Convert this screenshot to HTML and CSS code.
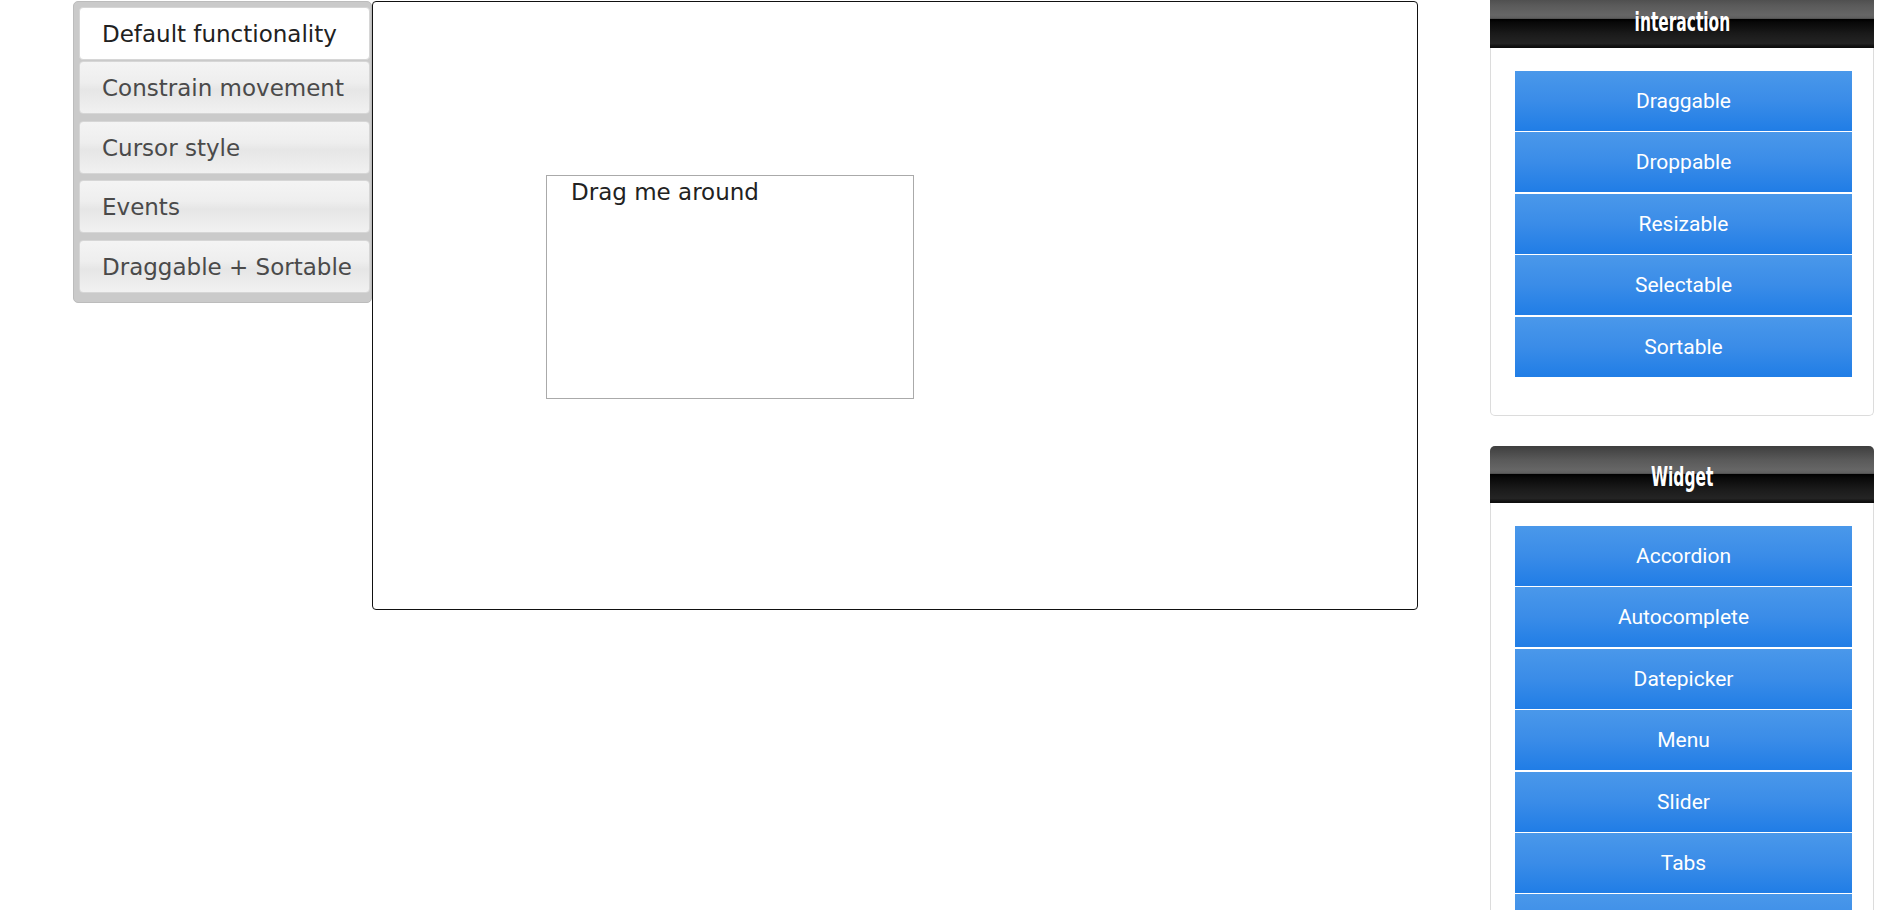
FILE: index.html
```html
<!DOCTYPE html>
<html lang="en">
<head>
<meta charset="utf-8">
<title>Draggable</title>
<link rel="stylesheet" href="styles.css">
</head>
<body>
<div class="page">
  <div class="demo">
    <ul class="tabs-nav">
      <li class="tab active">Default functionality</li>
      <li class="tab">Constrain movement</li>
      <li class="tab">Cursor style</li>
      <li class="tab">Events</li>
      <li class="tab">Draggable + Sortable</li>
    </ul>
    <div class="tab-panel">
      <div class="draggable"><p>Drag me around</p></div>
    </div>
  </div>
  <aside class="sidebar">
    <section class="side-box">
      <h3 class="side-head"><span class="side-title">interaction</span></h3>
      <ul class="side-list">
        <li class="side-btn">Draggable</li>
        <li class="side-btn">Droppable</li>
        <li class="side-btn">Resizable</li>
        <li class="side-btn">Selectable</li>
        <li class="side-btn">Sortable</li>
      </ul>
    </section>
    <section class="side-box">
      <h3 class="side-head"><span class="side-title">Widget</span></h3>
      <ul class="side-list">
        <li class="side-btn">Accordion</li>
        <li class="side-btn">Autocomplete</li>
        <li class="side-btn">Datepicker</li>
        <li class="side-btn">Menu</li>
        <li class="side-btn">Slider</li>
        <li class="side-btn">Tabs</li>
        <li class="side-btn"></li>
      </ul>
    </section>
  </aside>
</div>
</body>
</html>
```
FILE: styles.css
```css
html {
  overflow: hidden;
}
body {
  margin: 0;
  background: #fff;
  font-family: "DejaVu Sans", Verdana, sans-serif;
}
.page {
  display: flex;
  align-items: flex-start;
  padding-top: 1px;
}
.demo {
  display: flex;
  align-items: flex-start;
  margin-left: 73px;
}
.tabs-nav {
  width: 299px;
  box-sizing: border-box;
  margin: 0;
  padding: 5px 1px 9px 5px;
  list-style: none;
  background: #cacaca;
  border: 1px solid #bcbcbc;
  border-radius: 5px;
}
.tab {
  height: 53px;
  box-sizing: border-box;
  margin-bottom: 6.67px;
  padding: 13px 0 0 22px;
  border: 1px solid #d6d6d6;
  border-radius: 4px;
  background: linear-gradient(to bottom, #f4f4f4 0%, #eeeeee 40%, #e6e6e6 55%, #ececec 80%, #f1f1f1 100%);
  color: #4a4a4a;
  font-size: 23px;
  line-height: 27px;
  white-space: nowrap;
}
.tab.active {
  background: #fff;
  color: #212121;
  margin-bottom: 1px;
}
.tab:last-child {
  margin-bottom: 0;
}
.tab-panel {
  width: 1046px;
  height: 609px;
  box-sizing: border-box;
  border: 1px solid #111;
  border-radius: 4px;
}
.draggable {
  width: 368px;
  height: 224px;
  box-sizing: border-box;
  margin: 173px 0 0 173px;
  padding: 3px 24px;
  border: 1px solid #aaa;
  color: #222;
  font-size: 23px;
  line-height: 27px;
}
.draggable p {
  margin: 0;
}
.sidebar {
  width: 384px;
  margin-left: 72px;
  margin-top: -10px;
}
.side-box {
  background: #fff;
  border: 1px solid #dcdcdc;
  border-top: 0;
  border-radius: 5px;
  margin-bottom: 30.5px;
}
.side-head {
  height: 57px;
  box-sizing: border-box;
  margin: 0 -1px;
  padding-top: 5px;
  border-radius: 5px 5px 0 0;
  background: linear-gradient(to bottom, #3e3e3e 0%, #5a5a5a 25%, #666 42%, #5e5e5e 48%, #000 50%, #080808 55%, #1a1a1a 75%, #242424 92%, #111 97%, #0c0c0c 100%);
  color: #fff;
  text-align: center;
  font-family: "DejaVu Sans Condensed", "DejaVu Sans", sans-serif;
  font-stretch: condensed;
  font-weight: bold;
  font-size: 26px;
  line-height: 52px;
}
.side-title {
  display: inline-block;
  transform: scaleX(0.66);
}
.side-list {
  margin: 0;
  padding: 23px 0 38px 24px;
  list-style: none;
}
.side-btn {
  width: 337px;
  height: 60px;
  margin-bottom: 1.4px;
  display: flex;
  align-items: center;
  justify-content: center;
  background: linear-gradient(to bottom, #4a98ea 0%, #3a8ce8 50%, #207de6 100%);
  color: #fff;
  font-family: Roboto, "Liberation Sans", sans-serif;
  font-size: 21px;
}
.side-btn:last-child {
  margin-bottom: 0;
}
```
